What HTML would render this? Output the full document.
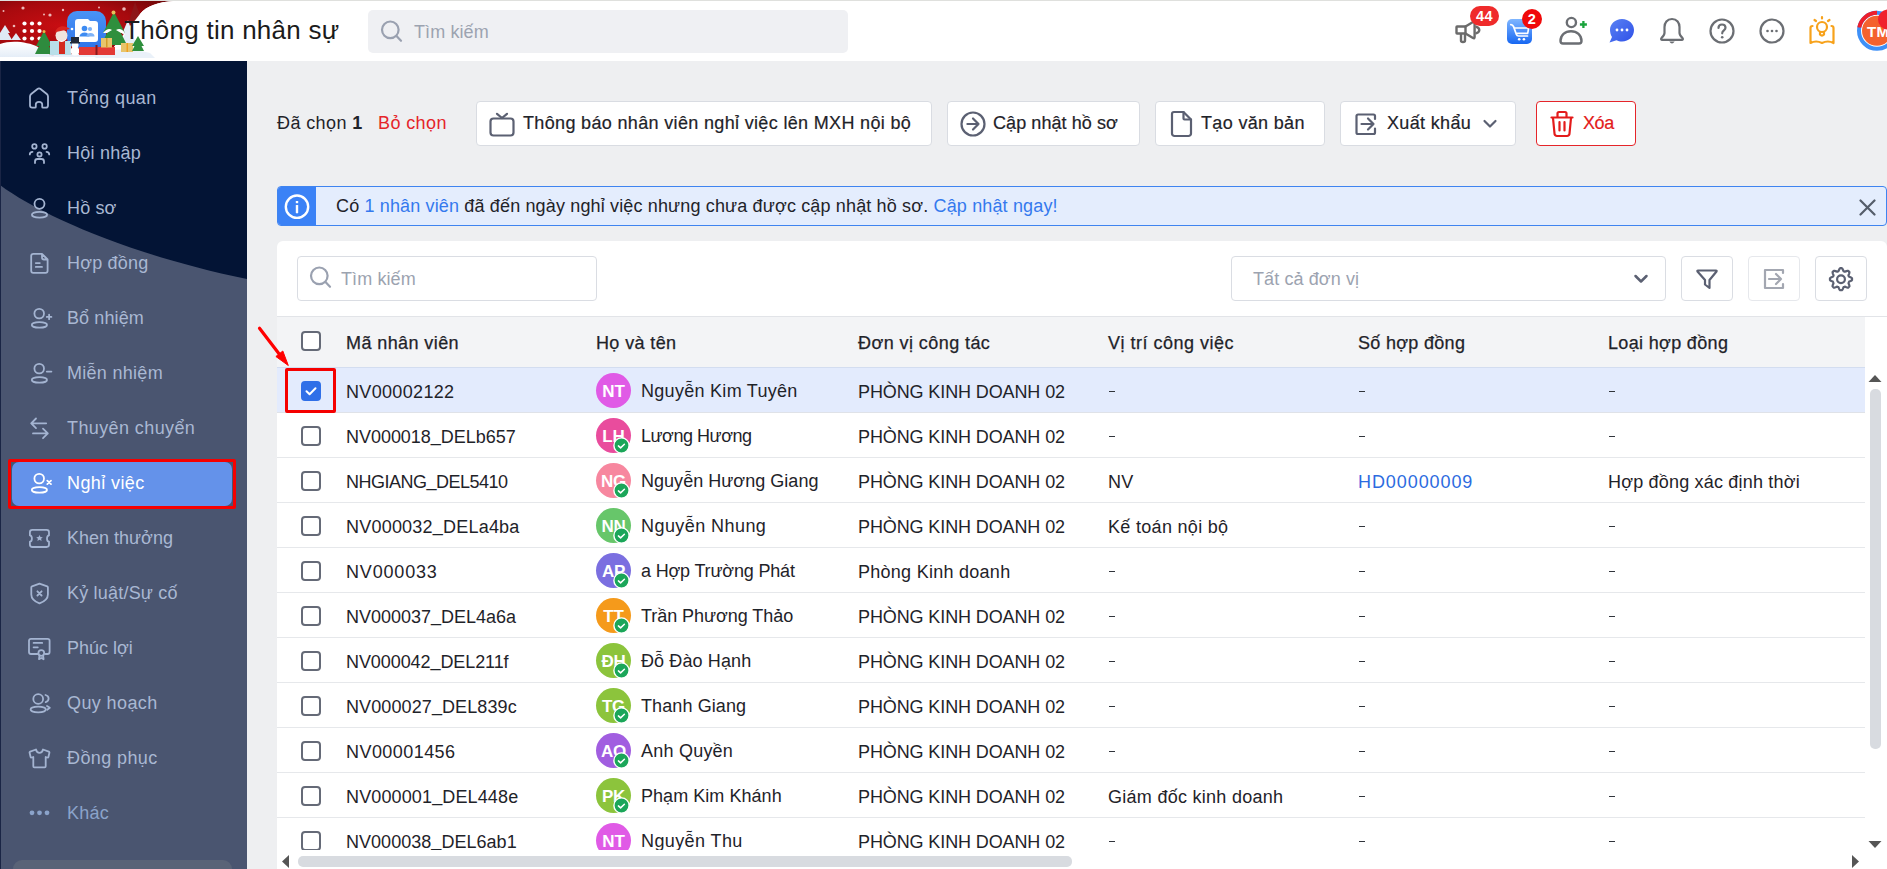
<!DOCTYPE html>
<html><head><meta charset="utf-8">
<style>
*{box-sizing:border-box;margin:0;padding:0}
html,body{width:1887px;height:869px;overflow:hidden;background:#eeeff1;font-family:"Liberation Sans",sans-serif;color:#1f2329;letter-spacing:0.4px}
.abs{position:absolute}
#hdr{position:absolute;left:0;top:0;width:1887px;height:61px;background:#fff;}
#hdrline{position:absolute;left:0;top:0;width:1887px;height:1px;background:#dfe0dd}
#title{position:absolute;left:124px;top:15px;font-size:26px;letter-spacing:0.25px;color:#1b1b1b;white-space:nowrap}
#hsearch{position:absolute;left:368px;top:10px;width:480px;height:43px;background:#eff0f3;border-radius:5px}
#hsearch .ph{position:absolute;left:46px;top:12px;font-size:18px;color:#9ca3b0;letter-spacing:0.1px}
#side{position:absolute;left:0;top:61px;width:247px;height:808px;background:#4a5570;overflow:hidden}
.sitem{position:absolute;left:12px;width:220px;height:40px}
.sitem .sic{position:absolute;left:16px;top:9px;width:25px;height:25px;line-height:0}
.sitem .stx{position:absolute;left:55px;top:11px;font-size:18px;color:#a9b8d3;white-space:nowrap;line-height:20px}
.sitem.sel{background:#6492ea;border-radius:7px;height:44px}
.sitem.sel .stx{color:#fff;top:11px}
.sitem.sel .sic{top:9px}
.selbox{position:absolute;left:8px;width:228px;height:50px;border:3px solid #f50000;border-radius:2px}
#main{position:absolute;left:248px;top:61px;width:1639px;height:808px;background:#eeeff1}
.t18{font-size:18px;white-space:nowrap}
.btn{position:absolute;top:101px;height:45px;background:#fff;border:1px solid #d9dce2;border-radius:4px}
.btn .bt{position:absolute;top:10.7px;font-size:18px;white-space:nowrap;color:#1f2329;line-height:20px;-webkit-text-stroke:0.2px currentColor;letter-spacing:0.34px}
.btn svg{position:absolute}
#banner{position:absolute;left:277px;top:186px;width:1610px;height:40px;background:#e4edfd;border:1px solid #3f84f0;border-radius:4px;overflow:hidden}
#banner .ib{position:absolute;left:0;top:0;width:38px;height:40px;background:#3b82f6}
#card{position:absolute;left:277px;top:241px;width:1610px;height:640px;background:#fff;border-radius:6px}
.inp{position:absolute;background:#fff;border:1px solid #dadde3;border-radius:4px}
.ibtn{position:absolute;top:256px;width:52px;height:45px;background:#fff;border:1px solid #dadde3;border-radius:4px}
#thead{position:absolute;left:277px;top:316px;width:1588px;height:51px;background:#f3f4f6;border-top:1px solid #e2e4e8}
#thead .h{position:absolute;top:16px;font-size:18px;color:#1f2329;white-space:nowrap;line-height:20px;-webkit-text-stroke:0.25px #1f2329}
.row{position:absolute;left:277px;width:1588px;height:46px;background:#fff;border-top:1px solid #e6e8eb;border-bottom:1px solid #e6e8eb}
.row.selrow{background:#e3ebfd;border-top-color:#d3ddf0;border-bottom-color:#dfe2e8;z-index:1}
.cb{position:absolute;left:24px;top:13px;width:20px;height:20px;border:2px solid #656a77;border-radius:4px;background:#fff}
.cb.on{background:#2f6fe8;border-color:#2f6fe8}
.cb.on svg{position:absolute;left:-2px;top:-2px}
.cell{position:absolute;top:14px;font-size:18px;line-height:20px;white-space:nowrap;color:#1f2329}
.c1{left:69px}.c2{left:364px;top:13px}.c3{left:581px}.c4{left:831px}.c5{left:1081px}.c6{left:1331px}
.link{color:#2c6be0}
.dash{position:absolute;top:23.2px;width:6px;height:1.3px;background:#30343b}
.av{position:absolute;left:319px;top:5px;width:35px;height:35px;border-radius:50%;color:#fff;font-size:17px;font-weight:bold;text-align:center;line-height:37px;letter-spacing:-0.2px}
.badge{position:absolute;left:16.5px;top:19px;width:17px;height:17px;line-height:0}
</style></head><body>
<div id="hdr">
  <svg class="abs" style="left:0;top:0" width="175" height="61" viewBox="0 0 175 61">
    <defs>
      <radialGradient id="rg" cx="0.35" cy="0.45" r="0.75"><stop offset="0" stop-color="#c80d12"/><stop offset="0.55" stop-color="#a80a0e"/><stop offset="1" stop-color="#6e0608"/></radialGradient>
      <linearGradient id="snow" x1="0" y1="0" x2="0" y2="1"><stop offset="0" stop-color="#ffffff"/><stop offset="1" stop-color="#e3ecf7"/></linearGradient>
      <linearGradient id="ib" x1="0" y1="0" x2="0" y2="1"><stop offset="0" stop-color="#4a93f5"/><stop offset="1" stop-color="#2f74ea"/></linearGradient>
    </defs>
    <path d="M0 1 H174 C158 2 146 6 140 14 C134 22 128 28 124 34 L114 47 L104 56 H0 Z" fill="url(#rg)"/>
    <polygon points="135,2 128,24 142,20" fill="#8a1a1c" opacity="0.8"/>
    <g fill="#f3c9c9" opacity="0.9"><circle cx="23" cy="8" r="1.6"/><circle cx="3.5" cy="11" r="1"/><circle cx="44" cy="14.5" r="1"/><circle cx="50" cy="15" r="1.6"/><circle cx="63" cy="10" r="1.2"/><circle cx="99" cy="7.5" r="1"/><circle cx="124" cy="9" r="1.8"/><circle cx="14" cy="26" r="1.3"/></g>
    <path d="M0 33 L5 25 L10 33 L8 33 L12 40 L0 40 Z" fill="#dfe9f5"/>
    <path d="M11 40 L16 33 L21 40 Z" fill="#dfe9f5"/>
    <path d="M0 44 C12 40 28 42 38 47 C45 51 50 56 60 58 H0 Z" fill="url(#snow)"/>
    <path d="M30 58 C60 52 100 54 150 56 L165 59 H30 Z" fill="#e9f0f8"/>
    <rect x="0" y="57" width="175" height="4" fill="#ffffff"/>
    <path d="M124 34 C128 28 134 22 140 14 C146 6 158 2 174 1 H175 V61 H100 L104 56 L114 47 Z" fill="#ffffff"/><path d="M128 20 L122 34 L125 34 L120 44 L136 44 Z" fill="#e6eef8"/><path d="M100 52 C115 48 135 49 150 53 L155 58 H95 Z" fill="#eaf1f9"/>
    <g fill="#fff"><circle cx="24.5" cy="23.5" r="2.1"/><circle cx="32" cy="23.5" r="2.1"/><circle cx="39.5" cy="23.5" r="2.1"/><circle cx="24.5" cy="31" r="2.1"/><circle cx="32" cy="31" r="2.1"/><circle cx="39.5" cy="31" r="2.1"/><circle cx="24.5" cy="38.5" r="2.1"/><circle cx="32" cy="38.5" r="2.1"/><circle cx="39.5" cy="38.5" r="2.1"/></g>
    <path d="M44 31 L36 46 L39 46 L35 54 L53 54 L49 46 L52 46 Z" fill="#2e8b3e"/>
    <circle cx="44" cy="31.5" r="1.5" fill="#e8b64a"/>
    <rect x="67" y="11" width="39" height="37" rx="10" fill="url(#ib)"/>
    <path d="M78 19 H88 L90 21 H95 Q98 21 98 24 V39 Q98 42 95 42 H78 Q75 42 75 39 V22 Q75 19 78 19 Z" fill="#fff"/>
    <circle cx="84.5" cy="28.5" r="2.8" fill="#3d8bf2"/><circle cx="90" cy="29" r="2.1" fill="#7db2f7"/>
    <path d="M79.5 36.5 a5 4 0 0 1 10 0 Z" fill="#3d8bf2"/><path d="M86.5 36.5 a4 3.5 0 0 1 8 0 Z" fill="#7db2f7"/>
    <rect x="50" y="41" width="21" height="14" fill="#b9dfe9"/><rect x="59" y="41" width="6" height="13" fill="#d42a1e"/>
    <circle cx="61.5" cy="35.5" r="6" fill="#f0e4de"/><path d="M55 33 C56 26 64 24 70 29 L56 32 Z" fill="#d9251f"/><circle cx="72" cy="29" r="1.3" fill="#fff"/>
    <path d="M56 38 Q61.5 44 67 38 Q66 41 61.5 42 Q57 41 56 38 Z" fill="#ffffff"/>
    <circle cx="75" cy="51" r="4.5" fill="#ffffff"/><circle cx="75" cy="45" r="3.5" fill="#ffffff"/><rect x="71" y="37" width="8" height="5" fill="#222a3a"/><rect x="70" y="42" width="10" height="1.5" fill="#222a3a"/>
    <rect x="79" y="47" width="36" height="8" fill="#e33a36"/><rect x="95.5" y="45" width="2" height="10" fill="#8a1a1c"/>
    <path d="M114 12 L103 33 L107 33 L101 45 L127 45 L121 33 L125 33 Z" fill="#2f8f3d"/>
    <path d="M103 33 Q108 27 112 30 L107 33 Z M116 30 Q121 27 125 33 L121 33 Z" fill="#ffffff"/>
    <circle cx="113.5" cy="12.5" r="2" fill="#e8c05a"/>
    <rect x="101" y="38" width="11" height="9.5" fill="#e8c46a"/><rect x="106" y="38" width="1.5" height="9.5" fill="#d29a2a"/>
    <rect x="121" y="43" width="12" height="9" fill="#e8c46a"/><rect x="126.5" y="43" width="1.5" height="9" fill="#f0a020"/>
    <path d="M138 36 L132 46 L134.5 46 L132 51 L144 51 L141.5 46 L144 46 Z" fill="#2f8f3d"/>
  </svg>
  <div id="hdrline"></div>
  <div id="title">Thông tin nhân sự</div>
  <div id="hsearch">
    <svg class="abs" style="left:12px;top:9px" width="24" height="24" viewBox="0 0 24 24"><circle cx="10.3" cy="10.8" r="8.3" stroke="#9aa1b0" stroke-width="2.2" fill="none"/><path d="M16.5 17 L21 21.8" stroke="#9aa1b0" stroke-width="2.2" stroke-linecap="round"/></svg>
    <div class="ph">Tìm kiếm</div>
  </div>
  <!-- header icons -->
  
  <!-- megaphone -->
  <svg class="abs" style="left:1445px;top:5px" width="40" height="45" viewBox="1445 5 40 45"><g stroke="#6b6b6b" stroke-width="2.4" fill="none" stroke-linejoin="round" stroke-linecap="round"><path d="M1457 26.5 H1465.5 V33.5 H1457 Q1456.5 33.5 1456.5 33 V27 Q1456.5 26.5 1457 26.5 Z"/><path d="M1465.5 26.5 L1473 22 Q1474.6 21.2 1474.6 23 V37 Q1474.6 38.8 1473 38 L1465.5 33.5"/><path d="M1476.5 26.8 Q1479.3 28 1479.3 30 Q1479.3 32 1476.5 33.2"/><path d="M1461 34.5 V40.6 Q1461 42 1463 42 Q1465 42 1465 40.6 V34.5"/></g></svg>
  <div class="abs" style="left:1470px;top:6px;width:29px;height:20px;border-radius:10px;background:#ef2b2b;color:#fff;font-weight:bold;font-size:14.5px;line-height:20px;text-align:center;letter-spacing:0.5px">44</div>
  <!-- cart -->
  <svg class="abs" style="left:1507px;top:19px" width="25" height="25" viewBox="0 0 25 25"><defs><linearGradient id="cg" x1="0" y1="0" x2="0" y2="1"><stop offset="0" stop-color="#7fb6ff"/><stop offset="1" stop-color="#1767f2"/></linearGradient></defs><rect x="0" y="0" width="25" height="25" rx="5" fill="url(#cg)"/><path d="M3.8 5.6 Q5.6 5.4 6.6 7.6 L9.3 15.2 Q9.9 17 11.6 17 H20.5 M7.6 9 H21.5 Q21.3 12 20.6 14.4 H9" stroke="#fff" stroke-width="1.7" fill="none" stroke-linejoin="round" stroke-linecap="round"/><circle cx="12.2" cy="20.2" r="1.3" fill="#fff"/><circle cx="16.9" cy="20.2" r="1.3" fill="#fff"/></svg>
  <div class="abs" style="left:1522px;top:9px;width:20px;height:20px;border-radius:50%;background:#f00a0a;color:#fff;font-weight:bold;font-size:14.5px;line-height:20px;text-align:center">2</div>
  <!-- person add -->
  <svg class="abs" style="left:1555px;top:14px" width="36" height="34" viewBox="1555 14 36 34"><g stroke="#6b6e73" stroke-width="2.4" fill="none" stroke-linejoin="round"><circle cx="1571.4" cy="22.5" r="4.6"/><path d="M1560.5 41 C1560.5 35 1565 31.2 1571 31.2 C1577 31.2 1581.5 35 1581.5 41 Q1581.5 43.5 1579 43.5 H1563 Q1560.5 43.5 1560.5 41 Z"/></g><path d="M1583.4 21 V28 M1579.9 24.5 H1586.9" stroke="#1aa33c" stroke-width="2.3"/></svg>
  <!-- chat -->
  <svg class="abs" style="left:1609px;top:18px" width="26" height="26" viewBox="0 0 26 26"><defs><linearGradient id="chg" x1="0" y1="0" x2="1" y2="1"><stop offset="0" stop-color="#5a82f3"/><stop offset="1" stop-color="#2f50e8"/></linearGradient></defs><path d="M13 1 C20 1 25 6 25 12 C25 18.5 20 23.5 13 23.5 C11 23.5 9 23 7.5 22.2 L0.5 24.5 L3 19 C1.8 17 1 14.5 1 12 C1 6 6 1 13 1 Z" fill="url(#chg)"/><circle cx="8" cy="12" r="1.4" fill="#fff"/><circle cx="13" cy="12" r="1.4" fill="#fff"/><circle cx="18" cy="12" r="1.4" fill="#fff"/></svg>
  <!-- bell -->
  <svg class="abs" style="left:1658px;top:17px" width="28" height="29" viewBox="0 0 28 29"><g stroke="#6b6e73" stroke-width="2.2" fill="none" stroke-linejoin="round"><path d="M14 2 C9 2 6.5 6 6.5 10 V16 C6.5 18 5 19.5 3.5 21 Q2.5 22.5 4 22.8 H24 Q25.5 22.5 24.5 21 C23 19.5 21.5 18 21.5 16 V10 C21.5 6 19 2 14 2 Z"/></g><path d="M11.3 24.6 Q14 28.6 16.7 24.6 Z" fill="#6b6e73"/><g></g></svg>
  <!-- question -->
  <svg class="abs" style="left:1708px;top:17px" width="28" height="28" viewBox="0 0 28 28"><circle cx="14" cy="14" r="11.5" stroke="#6b6e73" stroke-width="2.2" fill="none"/><path d="M10.5 11 C10.5 8.5 12 7.5 14 7.5 C16 7.5 17.5 8.8 17.5 10.8 C17.5 13.3 14.2 13.5 14.2 16.3" stroke="#6b6e73" stroke-width="2.2" fill="none" stroke-linecap="round"/><circle cx="14.2" cy="20.3" r="1.3" fill="#6b6e73"/></svg>
  <!-- more -->
  <svg class="abs" style="left:1758px;top:17px" width="28" height="28" viewBox="0 0 28 28"><circle cx="14" cy="14" r="11.5" stroke="#6b6e73" stroke-width="2.2" fill="none"/><circle cx="9.5" cy="14" r="1.3" fill="#6b6e73"/><circle cx="14" cy="14" r="1.3" fill="#6b6e73"/><circle cx="18.5" cy="14" r="1.3" fill="#6b6e73"/></svg>
  <!-- bulb book -->
  <svg class="abs" style="left:1808px;top:15px" width="28" height="30" viewBox="0 0 28 30"><g stroke="#f7a21b" stroke-width="2.2" fill="none" stroke-linecap="round" stroke-linejoin="round"><path d="M4.5 11 Q2.5 11 2.5 13 V28 Q8 25 14 28 Q20 25 25.5 28 V13 Q25.5 11 23.5 11"/><circle cx="14" cy="12" r="5"/><path d="M12 17 V19.5 Q14 21.5 16 19.5 V17"/><path d="M14 2 V3.5 M6.5 5 L8 6 M21.5 5 L20 6"/></g></svg>
  <!-- avatar -->
  <svg class="abs" style="left:1855px;top:9px" width="32" height="44" viewBox="0 0 32 44"><circle cx="22" cy="21.8" r="18" stroke="#3e90f7" stroke-width="4" fill="none"/><path d="M4.3 18.5 A18 18 0 0 1 22 3.8" stroke="#ee1f2b" stroke-width="4" fill="none"/><circle cx="22" cy="21.8" r="15" fill="#f4622e"/><text x="12" y="27.5" font-family="Liberation Sans" font-weight="bold" font-size="15" fill="#fff">TM</text><circle cx="33" cy="10.5" r="10" fill="#f0212d"/></svg>

</div>
<div id="side">
  <svg class="abs" style="left:0;top:0" width="247" height="808" viewBox="0 61 247 808"><path d="M0 61 H247 V279 C130 255 40 215 0 185 Z" fill="#031435"/></svg>
  <div class="abs" style="left:0;top:0;width:1px;height:808px;background:#1a2545"></div>
<div class="sitem" style="top:16px"><span class="sic"><svg width="25" height="25" viewBox="0 0 25 25"><path d="M2 10.5 Q2 9 3.2 8 L9.5 3 Q11 1.9 12.5 3 L18.8 8 Q20 9 20 10.5 V19.5 Q20 21.7 17.8 21.7 H15 Q14.2 21.7 14.2 20.9 V18.5 Q14.2 15.9 11 15.9 Q7.8 15.9 7.8 18.5 V20.9 Q7.8 21.7 7 21.7 H4.2 Q2 21.7 2 19.5 Z" stroke="#a4b4d1" stroke-width="1.8" fill="none" stroke-linecap="round" stroke-linejoin="round"/></svg></span><span class="stx" style="letter-spacing:0.4px">Tổng quan</span></div>
<div class="sitem" style="top:71px"><span class="sic"><svg width="25" height="25" viewBox="0 0 25 25"><circle cx="6.4" cy="5.4" r="2.2" stroke="#a4b4d1" stroke-width="1.8" fill="none" stroke-linecap="round" stroke-linejoin="round"/><circle cx="16.6" cy="5.4" r="2.2" stroke="#a4b4d1" stroke-width="1.8" fill="none" stroke-linecap="round" stroke-linejoin="round"/><circle cx="11.5" cy="13.4" r="2.1" stroke="#a4b4d1" stroke-width="1.8" fill="none" stroke-linecap="round" stroke-linejoin="round"/><path d="M1.8 13.4 Q1.8 10.8 4.5 10.8 M21.2 13.4 Q21.2 10.8 18.5 10.8 M7 22 V20.5 Q7 18 9.5 18 H13.5 Q16 18 16 20.5 V22" stroke="#a4b4d1" stroke-width="1.8" fill="none" stroke-linecap="round" stroke-linejoin="round"/></svg></span><span class="stx" style="letter-spacing:0.26px">Hội nhập</span></div>
<div class="sitem" style="top:126px"><span class="sic"><svg width="25" height="25" viewBox="0 0 25 25"><circle cx="11.5" cy="7.8" r="5" stroke="#a4b4d1" stroke-width="1.8" fill="none" stroke-linecap="round" stroke-linejoin="round"/><ellipse cx="11.5" cy="18.7" rx="7.6" ry="2.9" stroke="#a4b4d1" stroke-width="1.8" fill="none" stroke-linecap="round" stroke-linejoin="round"/></svg></span><span class="stx" style="letter-spacing:0.15px">Hồ sơ</span></div>
<div class="sitem" style="top:181px"><span class="sic"><svg width="25" height="25" viewBox="0 0 25 25"><path d="M5.5 2.8 H14 L19.6 8.5 V19.8 Q19.6 21.9 17.5 21.9 H5.3 Q3.2 21.9 3.2 19.8 V5 Q3.2 2.8 5.5 2.8 Z M14 2.8 V6.5 Q14 8.5 16 8.5 H19.6 M7.8 12.1 H11.8 M7.8 15.9 H14" stroke="#a4b4d1" stroke-width="1.8" fill="none" stroke-linecap="round" stroke-linejoin="round"/></svg></span><span class="stx" style="letter-spacing:0.2px">Hợp đồng</span></div>
<div class="sitem" style="top:236px"><span class="sic"><svg width="25" height="25" viewBox="0 0 25 25"><circle cx="11.2" cy="7.6" r="4.8" stroke="#a4b4d1" stroke-width="1.8" fill="none" stroke-linecap="round" stroke-linejoin="round"/><ellipse cx="11.4" cy="18.9" rx="7.6" ry="2.8" stroke="#a4b4d1" stroke-width="1.8" fill="none" stroke-linecap="round" stroke-linejoin="round"/><path d="M21.1 8.6 V13.2 M18.8 10.9 H23.4" stroke="#a4b4d1" stroke-width="1.8" fill="none" stroke-linecap="round" stroke-linejoin="round"/></svg></span><span class="stx" style="letter-spacing:0.1px">Bổ nhiệm</span></div>
<div class="sitem" style="top:291px"><span class="sic"><svg width="25" height="25" viewBox="0 0 25 25"><circle cx="11.2" cy="7.6" r="4.8" stroke="#a4b4d1" stroke-width="1.8" fill="none" stroke-linecap="round" stroke-linejoin="round"/><ellipse cx="11.4" cy="18.9" rx="7.6" ry="2.8" stroke="#a4b4d1" stroke-width="1.8" fill="none" stroke-linecap="round" stroke-linejoin="round"/><path d="M18.8 10.6 H23.4" stroke="#a4b4d1" stroke-width="1.8" fill="none" stroke-linecap="round" stroke-linejoin="round"/></svg></span><span class="stx" style="letter-spacing:0.29px">Miễn nhiệm</span></div>
<div class="sitem" style="top:346px"><span class="sic"><svg width="25" height="25" viewBox="0 0 25 25"><path d="M18.2 7.3 H3.2 M8 2.5 L3.2 7.3 L8 12.1 M5 17.4 H19.8 M15 12.6 L19.8 17.4 L15 22.2" stroke="#a4b4d1" stroke-width="1.8" fill="none" stroke-linecap="round" stroke-linejoin="round"/></svg></span><span class="stx" style="letter-spacing:0.4px">Thuyên chuyển</span></div>
<div class="selbox" style="top:398px"></div>
<div class="sitem sel" style="top:401px"><span class="sic"><svg width="25" height="25" viewBox="0 0 25 25"><circle cx="11.2" cy="7.6" r="4.8" stroke="#ffffff" stroke-width="1.8" fill="none" stroke-linecap="round" stroke-linejoin="round"/><ellipse cx="11.4" cy="18.9" rx="7.6" ry="2.8" stroke="#ffffff" stroke-width="1.8" fill="none" stroke-linecap="round" stroke-linejoin="round"/><path d="M19.3 9.6 L23 13.1 M23 9.6 L19.3 13.1" stroke="#ffffff" stroke-width="1.8" fill="none" stroke-linecap="round" stroke-linejoin="round"/></svg></span><span class="stx">Nghỉ việc</span></div>
<div class="sitem" style="top:456px"><span class="sic"><svg width="25" height="25" viewBox="0 0 25 25"><path d="M1.9 6.3 Q1.9 3.9 4.3 3.9 H18.6 Q21 3.9 21 6.3 V9.3 Q19 9.5 19 12.5 Q19 15.5 21 15.7 V18.6 Q21 21 18.6 21 H4.3 Q1.9 21 1.9 18.6 V15.7 Q3.9 15.5 3.9 12.5 Q3.9 9.5 1.9 9.3 Z" stroke="#a4b4d1" stroke-width="1.8" fill="none" stroke-linecap="round" stroke-linejoin="round"/><path d="M11.5 8.9 L12.5 11 L14.8 11.2 L13.1 12.7 L13.6 15 L11.5 13.8 L9.4 15 L9.9 12.7 L8.2 11.2 L10.5 11 Z" fill="#a4b4d1" stroke="none"/></svg></span><span class="stx" style="letter-spacing:0.0px">Khen thưởng</span></div>
<div class="sitem" style="top:511px"><span class="sic"><svg width="25" height="25" viewBox="0 0 25 25"><path d="M11.5 2.6 L19.2 5.3 Q19.9 5.6 19.9 6.3 V13.5 Q19.9 19.3 11.5 22.4 Q3.3 19.3 3.3 13.5 V6.3 Q3.3 5.6 4 5.3 Z M9.4 10.3 L13.6 14.5 M13.6 10.3 L9.4 14.5" stroke="#a4b4d1" stroke-width="1.8" fill="none" stroke-linecap="round" stroke-linejoin="round"/></svg></span><span class="stx" style="letter-spacing:0.2px">Kỷ luật/Sự cố</span></div>
<div class="sitem" style="top:566px"><span class="sic"><svg width="25" height="25" viewBox="0 0 25 25"><path d="M9.5 18 H3 Q1 18 1 16 V4.8 Q1 2.9 3 2.9 H19.6 Q21.6 2.9 21.6 4.8 V16 Q21.6 18 19.6 18 H17.5 M5.6 6.9 H14.2 M5.6 11.3 H9.8" stroke="#a4b4d1" stroke-width="1.8" fill="none" stroke-linecap="round" stroke-linejoin="round"/><circle cx="13.3" cy="17" r="2.9" stroke="#a4b4d1" stroke-width="1.8" fill="none" stroke-linecap="round" stroke-linejoin="round"/><path d="M11.5 19.5 L11 23.2 L13.3 22 L15.6 23.2 L15.1 19.5" stroke="#a4b4d1" stroke-width="1.8" fill="none" stroke-linecap="round" stroke-linejoin="round"/></svg></span><span class="stx" style="letter-spacing:0.0px">Phúc lợi</span></div>
<div class="sitem" style="top:621px"><span class="sic"><svg width="25" height="25" viewBox="0 0 25 25"><circle cx="10.2" cy="8" r="4.9" stroke="#a4b4d1" stroke-width="1.8" fill="none" stroke-linecap="round" stroke-linejoin="round"/><ellipse cx="10.2" cy="18.5" rx="7.6" ry="2.8" stroke="#a4b4d1" stroke-width="1.8" fill="none" stroke-linecap="round" stroke-linejoin="round"/><path d="M17.5 4 Q20.6 4.8 20.6 7.5 Q20.6 10.3 17.7 11.2 M19 15 L21.8 16.7 L19.2 18.7" stroke="#a4b4d1" stroke-width="1.8" fill="none" stroke-linecap="round" stroke-linejoin="round"/></svg></span><span class="stx" style="letter-spacing:0.4px">Quy hoạch</span></div>
<div class="sitem" style="top:676px"><span class="sic"><svg width="25" height="25" viewBox="0 0 25 25"><path d="M8 3.5 L2.2 5.6 Q1.4 6 1.6 6.8 L2.6 11 Q2.8 11.7 3.6 11.5 L5.3 11 V20.3 Q5.3 21.3 6.3 21.3 H16.7 Q17.7 21.3 17.7 20.3 V11 L19.4 11.5 Q20.2 11.7 20.4 11 L21.4 6.8 Q21.6 6 20.8 5.6 L15 3.5 Q14.3 6.8 11.5 6.8 Q8.7 6.8 8 3.5 Z" stroke="#a4b4d1" stroke-width="1.8" fill="none" stroke-linecap="round" stroke-linejoin="round"/></svg></span><span class="stx" style="letter-spacing:0.4px">Đồng phục</span></div>
<div class="sitem" style="top:731px"><span class="sic"><svg width="25" height="25" viewBox="0 0 25 25"><circle cx="4" cy="11.8" r="2.4" fill="#8ba3ca"/><circle cx="11.5" cy="11.8" r="2.4" fill="#8ba3ca"/><circle cx="19" cy="11.8" r="2.4" fill="#8ba3ca"/></svg></span><span class="stx" style="letter-spacing:0.2px;color:#8ba3ca">Khác</span></div>
  <div class="abs" style="left:12.5px;top:799px;width:219px;height:30px;background:#596377;border-radius:9px"></div>
</div>
<div id="main"></div>
<div class="abs t18" style="left:277px;top:113px">Đã chọn <b>1</b></div>
<div class="abs t18" style="left:378px;top:113px;color:#e5252a">Bỏ chọn</div>
<div class="btn" style="left:476px;width:456px"><div class="bt" style="left:46px">Thông báo nhân viên nghỉ việc lên MXH nội bộ</div></div>
<div class="btn" style="left:947px;width:193px"><div class="bt" style="left:45px;letter-spacing:0.07px">Cập nhật hồ sơ</div></div>
<div class="btn" style="left:1155px;width:170px"><div class="bt" style="left:45px">Tạo văn bản</div></div>
<div class="btn" style="left:1340px;width:176px"><div class="bt" style="left:46px">Xuất khẩu</div></div>
<div class="btn" style="left:1536px;width:100px;border-color:#e5252a"><div class="bt" style="left:46px;color:#e31b1b;letter-spacing:-0.4px">Xóa</div></div>

<svg class="abs" style="left:488px;top:112px" width="28" height="26" viewBox="0 0 28 26"><g stroke="#5b6072" stroke-width="2.2" fill="none" stroke-linecap="round" stroke-linejoin="round"><rect x="2.5" y="6.5" width="23" height="17" rx="3"/><path d="M9 1.8 L14 6 L19 1.8"/></g></svg>
<svg class="abs" style="left:959px;top:111px" width="28" height="27" viewBox="0 0 28 27"><g stroke="#5b6072" stroke-width="2.2" fill="none" stroke-linecap="round" stroke-linejoin="round"><circle cx="14" cy="13" r="11.5"/><path d="M8.4 13 H19.5 M14 7.5 L19.5 13 L14 18.5"/></g></svg>
<svg class="abs" style="left:1170px;top:110px" width="24" height="28" viewBox="0 0 24 28"><g stroke="#5b6072" stroke-width="2.2" fill="none" stroke-linecap="round" stroke-linejoin="round"><path d="M4 2 H13.5 L21 9.5 V23.5 A2.5 2.5 0 0 1 18.5 26 H4.5 A2.5 2.5 0 0 1 2 23.5 V4 A2 2 0 0 1 4 2 Z"/><path d="M13.5 2 V8.5 Q13.5 9.5 14.5 9.5 H21"/></g></svg>
<svg class="abs" style="left:1355px;top:113px" width="24" height="23" viewBox="0 0 24 23"><g stroke="#5b6072" stroke-width="2.2" fill="none" stroke-linecap="round" stroke-linejoin="round"><path d="M20 6 V3 A1.5 1.5 0 0 0 18.5 1.5 H3 A1.5 1.5 0 0 0 1.5 3 V19.5 A1.5 1.5 0 0 0 3 21 H18.5 A1.5 1.5 0 0 0 20 19.5 V15.5"/><path d="M6.5 11 H18.5 M13 5.5 L18.5 11 L13 16.5"/></g></svg>
<svg class="abs" style="left:1482px;top:118px" width="16" height="12" viewBox="0 0 16 12"><path d="M2.5 3 L8 8.5 L13.5 3" stroke="#5b6072" stroke-width="2.2" fill="none" stroke-linecap="round" stroke-linejoin="round"/></svg>
<svg class="abs" style="left:1549px;top:110px" width="26" height="28" viewBox="0 0 26 28"><g stroke="#e31b1b" stroke-width="2.2" fill="none" stroke-linecap="round" stroke-linejoin="round"><path d="M2.5 7.5 H23.5"/><path d="M8.5 7 V3.5 A1.5 1.5 0 0 1 10 2 H16 A1.5 1.5 0 0 1 17.5 3.5 V7"/><path d="M4 8 L5.5 23.5 A2.5 2.5 0 0 0 8 26 H18 A2.5 2.5 0 0 0 20.5 23.5 L22 8"/><path d="M10.5 12 V20.5 M15.5 12 V20.5"/></g></svg>
<div id="banner"><div class="ib"><svg class="abs" style="left:5px;top:6px" width="28" height="28" viewBox="0 0 28 28"><circle cx="14" cy="13.7" r="11.2" stroke="#fff" stroke-width="2.4" fill="none"/><rect x="12.8" y="8" width="2.4" height="2.2" fill="#fff"/><rect x="12.8" y="12" width="2.4" height="8.2" rx="0.5" fill="#fff"/></svg></div>
  <svg class="abs" style="left:1580px;top:11px" width="18" height="18" viewBox="0 0 18 18"><path d="M2.5 2.5 L16.5 16.5 M16.5 2.5 L2.5 16.5" stroke="#555d6a" stroke-width="2.2" stroke-linecap="round"/></svg>
  <div class="abs t18" style="left:58px;top:9px;letter-spacing:0.15px">Có <span style="color:#3479ee">1 nhân viên</span> đã đến ngày nghỉ việc nhưng chưa được cập nhật hồ sơ. <span style="color:#3479ee">Cập nhật ngay!</span></div>
</div>
<div id="card"></div>
<div class="inp" style="left:297px;top:256px;width:300px;height:45px">
  <svg class="abs" style="left:10.5px;top:8px" width="24" height="24" viewBox="0 0 24 24"><circle cx="10.3" cy="10.8" r="8.3" stroke="#9aa1b0" stroke-width="2.2" fill="none"/><path d="M16.5 17 L21 21.8" stroke="#9aa1b0" stroke-width="2.2" stroke-linecap="round"/></svg>
  <div class="abs t18" style="left:43px;top:12px;color:#9ca3b0;letter-spacing:0.1px">Tìm kiếm</div>
</div>
<div class="inp" style="left:1231px;top:256px;width:435px;height:45px">
  <div class="abs t18" style="left:21px;top:12px;color:#9ca3b0;letter-spacing:0.1px">Tất cả đơn vị</div>
</div>
<div class="ibtn" style="left:1681px"></div>
<div class="ibtn" style="left:1748px;border-color:#e6e8ec"></div>
<div class="ibtn" style="left:1815px"></div>

<svg class="abs" style="left:1633px;top:272px" width="16" height="14" viewBox="0 0 16 14"><path d="M2.5 4 L8 9.5 L13.5 4" stroke="#5b6072" stroke-width="2.5" fill="none" stroke-linecap="round" stroke-linejoin="round"/></svg>
<svg class="abs" style="left:1695px;top:267px" width="24" height="24" viewBox="0 0 24 24"><path d="M3 3.5 H21 Q22 3.5 21.5 4.5 L14.5 13 V21 L10 17.5 V13 L2.5 4.5 Q2 3.5 3 3.5 Z" stroke="#5b6072" stroke-width="2.2" fill="none" stroke-linejoin="round" stroke-linecap="round"/></svg>
<svg class="abs" style="left:1763px;top:268px" width="24" height="22" viewBox="0 0 24 22"><g stroke="#a3a7b1" stroke-width="2.2" fill="none" stroke-linecap="round" stroke-linejoin="round"><path d="M20 5 V2 H2 V20 H20 V16"/><path d="M6 11 H18 M13 6 L18 11 L13 16"/></g></svg>
<svg class="abs" style="left:1828px;top:266px" width="26" height="26" viewBox="0 0 26 26"><g stroke="#5b6072" stroke-width="2.2" fill="none" stroke-linejoin="round"><path d="M13.00 2.15 L13.43 2.16 L13.87 2.18 L14.26 2.58 L14.60 3.10 L14.89 3.69 L15.14 4.28 L15.36 4.82 L15.58 5.26 L15.89 5.37 L16.20 5.49 L16.50 5.62 L16.79 5.76 L17.25 5.60 L17.80 5.37 L18.39 5.13 L19.01 4.93 L19.62 4.80 L20.18 4.80 L20.50 5.09 L20.81 5.39 L21.11 5.70 L21.40 6.02 L21.40 6.58 L21.27 7.19 L21.07 7.81 L20.83 8.40 L20.60 8.95 L20.44 9.41 L20.58 9.70 L20.71 10.00 L20.83 10.31 L20.94 10.62 L21.38 10.84 L21.92 11.06 L22.51 11.31 L23.10 11.60 L23.62 11.94 L24.02 12.33 L24.04 12.77 L24.05 13.20 L24.04 13.63 L24.02 14.07 L23.62 14.46 L23.10 14.80 L22.51 15.09 L21.92 15.34 L21.38 15.56 L20.94 15.78 L20.83 16.09 L20.71 16.40 L20.58 16.70 L20.44 16.99 L20.60 17.45 L20.83 18.00 L21.07 18.59 L21.27 19.21 L21.40 19.82 L21.40 20.38 L21.11 20.70 L20.81 21.01 L20.50 21.31 L20.18 21.60 L19.62 21.60 L19.01 21.47 L18.39 21.27 L17.80 21.03 L17.25 20.80 L16.79 20.64 L16.50 20.78 L16.20 20.91 L15.89 21.03 L15.58 21.14 L15.36 21.58 L15.14 22.12 L14.89 22.71 L14.60 23.30 L14.26 23.82 L13.87 24.22 L13.43 24.24 L13.00 24.25 L12.57 24.24 L12.13 24.22 L11.74 23.82 L11.40 23.30 L11.11 22.71 L10.86 22.12 L10.64 21.58 L10.42 21.14 L10.11 21.03 L9.80 20.91 L9.50 20.78 L9.21 20.64 L8.75 20.80 L8.20 21.03 L7.61 21.27 L6.99 21.47 L6.38 21.60 L5.82 21.60 L5.50 21.31 L5.19 21.01 L4.89 20.70 L4.60 20.38 L4.60 19.82 L4.73 19.21 L4.93 18.59 L5.17 18.00 L5.40 17.45 L5.56 16.99 L5.42 16.70 L5.29 16.40 L5.17 16.09 L5.06 15.78 L4.62 15.56 L4.08 15.34 L3.49 15.09 L2.90 14.80 L2.38 14.46 L1.98 14.07 L1.96 13.63 L1.95 13.20 L1.96 12.77 L1.98 12.33 L2.38 11.94 L2.90 11.60 L3.49 11.31 L4.08 11.06 L4.62 10.84 L5.06 10.62 L5.17 10.31 L5.29 10.00 L5.42 9.70 L5.56 9.41 L5.40 8.95 L5.17 8.40 L4.93 7.81 L4.73 7.19 L4.60 6.58 L4.60 6.02 L4.89 5.70 L5.19 5.39 L5.50 5.09 L5.82 4.80 L6.38 4.80 L6.99 4.93 L7.61 5.13 L8.20 5.37 L8.75 5.60 L9.21 5.76 L9.50 5.62 L9.80 5.49 L10.11 5.37 L10.42 5.26 L10.64 4.82 L10.86 4.28 L11.11 3.69 L11.40 3.10 L11.74 2.58 L12.13 2.18 L12.57 2.16 Z"/><circle cx="13" cy="13.2" r="3.9"/></g></svg>
<div id="thead">
  <div class="cb" style="top:14px"></div>
  <div class="h" style="left:69px;letter-spacing:0.409px">Mã nhân viên</div>
  <div class="h" style="left:319px;letter-spacing:0.375px">Họ và tên</div>
  <div class="h" style="left:581px;letter-spacing:0.429px">Đơn vị công tác</div>
  <div class="h" style="left:831px;letter-spacing:0.5px">Vị trí công việc</div>
  <div class="h" style="left:1081px;letter-spacing:0.3px">Số hợp đồng</div>
  <div class="h" style="left:1331px;letter-spacing:0.333px">Loại hợp đồng</div>
</div>
<div class="row selrow" style="top:367px"><div class="cb on"><svg width="20" height="20" viewBox="0 0 20 20"><path d="M5.5 10.2 L8.6 13.2 L14.5 7.2" stroke="#fff" stroke-width="2" fill="none" stroke-linecap="round" stroke-linejoin="round"/></svg></div><div class="cell c1" style="letter-spacing:0.333px">NV00002122</div><div class="av" style="background:#e05ae6">NT</div><div class="cell c2" style="letter-spacing:0.287px">Nguyễn Kim Tuyên</div><div class="cell c3" style="letter-spacing:-0.111px">PHÒNG KINH DOANH 02</div><div class="dash" style="left:832px"></div><div class="dash" style="left:1082px"></div><div class="dash" style="left:1332px"></div></div>
<div class="row" style="top:412px"><div class="cb"></div><div class="cell c1" style="letter-spacing:-0.033px">NV000018<span style="position:relative;top:-2.5px">_</span>DELb657</div><div class="av" style="background:#e94c9d">LH<span class="badge"><svg width="17" height="17" viewBox="0 0 17 17"><circle cx="8.5" cy="8.5" r="7.6" fill="#1ba659" stroke="#fff" stroke-width="1.4"/><path d="M5.4 8.9 L7.6 10.9 L11.4 7.3" stroke="#fff" stroke-width="1.5" fill="none" stroke-linecap="round" stroke-linejoin="round"/></svg></span></div><div class="cell c2" style="letter-spacing:-0.47px">Lương Hương</div><div class="cell c3" style="letter-spacing:-0.111px">PHÒNG KINH DOANH 02</div><div class="dash" style="left:832px"></div><div class="dash" style="left:1082px"></div><div class="dash" style="left:1332px"></div></div>
<div class="row" style="top:457px"><div class="cb"></div><div class="cell c1" style="letter-spacing:-0.507px">NHGIANG<span style="position:relative;top:-2.5px">_</span>DEL5410</div><div class="av" style="background:#f7879f">NG<span class="badge"><svg width="17" height="17" viewBox="0 0 17 17"><circle cx="8.5" cy="8.5" r="7.6" fill="#1ba659" stroke="#fff" stroke-width="1.4"/><path d="M5.4 8.9 L7.6 10.9 L11.4 7.3" stroke="#fff" stroke-width="1.5" fill="none" stroke-linecap="round" stroke-linejoin="round"/></svg></span></div><div class="cell c2" style="letter-spacing:0.029px">Nguyễn Hương Giang</div><div class="cell c3" style="letter-spacing:-0.111px">PHÒNG KINH DOANH 02</div><div class="cell c4" style="letter-spacing:0.2px">NV</div><div class="cell c5 link" style="letter-spacing:0.922px">HD00000009</div><div class="cell c6" style="letter-spacing:0.19px">Hợp đồng xác định thời</div></div>
<div class="row" style="top:502px"><div class="cb"></div><div class="cell c1" style="letter-spacing:0.213px">NV000032<span style="position:relative;top:-2.5px">_</span>DELa4ba</div><div class="av" style="background:#67c66a">NN<span class="badge"><svg width="17" height="17" viewBox="0 0 17 17"><circle cx="8.5" cy="8.5" r="7.6" fill="#1ba659" stroke="#fff" stroke-width="1.4"/><path d="M5.4 8.9 L7.6 10.9 L11.4 7.3" stroke="#fff" stroke-width="1.5" fill="none" stroke-linecap="round" stroke-linejoin="round"/></svg></span></div><div class="cell c2" style="letter-spacing:0.436px">Nguyễn Nhung</div><div class="cell c3" style="letter-spacing:-0.111px">PHÒNG KINH DOANH 02</div><div class="cell c4" style="letter-spacing:0.308px">Kế toán nội bộ</div><div class="dash" style="left:1082px"></div><div class="dash" style="left:1332px"></div></div>
<div class="row" style="top:547px"><div class="cb"></div><div class="cell c1" style="letter-spacing:0.829px">NV000033</div><div class="av" style="background:#7b6fe0">AP<span class="badge"><svg width="17" height="17" viewBox="0 0 17 17"><circle cx="8.5" cy="8.5" r="7.6" fill="#1ba659" stroke="#fff" stroke-width="1.4"/><path d="M5.4 8.9 L7.6 10.9 L11.4 7.3" stroke="#fff" stroke-width="1.5" fill="none" stroke-linecap="round" stroke-linejoin="round"/></svg></span></div><div class="cell c2" style="letter-spacing:-0.175px">a Hợp Trường Phát</div><div class="cell c3" style="letter-spacing:0.267px">Phòng Kinh doanh</div><div class="dash" style="left:832px"></div><div class="dash" style="left:1082px"></div><div class="dash" style="left:1332px"></div></div>
<div class="row" style="top:592px"><div class="cb"></div><div class="cell c1" style="letter-spacing:-0.007px">NV000037<span style="position:relative;top:-2.5px">_</span>DEL4a6a</div><div class="av" style="background:#f59a1b">TT<span class="badge"><svg width="17" height="17" viewBox="0 0 17 17"><circle cx="8.5" cy="8.5" r="7.6" fill="#1ba659" stroke="#fff" stroke-width="1.4"/><path d="M5.4 8.9 L7.6 10.9 L11.4 7.3" stroke="#fff" stroke-width="1.5" fill="none" stroke-linecap="round" stroke-linejoin="round"/></svg></span></div><div class="cell c2" style="letter-spacing:-0.053px">Trần Phương Thảo</div><div class="cell c3" style="letter-spacing:-0.111px">PHÒNG KINH DOANH 02</div><div class="dash" style="left:832px"></div><div class="dash" style="left:1082px"></div><div class="dash" style="left:1332px"></div></div>
<div class="row" style="top:637px"><div class="cb"></div><div class="cell c1" style="letter-spacing:-0.08px">NV000042<span style="position:relative;top:-2.5px">_</span>DEL211f</div><div class="av" style="background:#8cc43c">ĐH<span class="badge"><svg width="17" height="17" viewBox="0 0 17 17"><circle cx="8.5" cy="8.5" r="7.6" fill="#1ba659" stroke="#fff" stroke-width="1.4"/><path d="M5.4 8.9 L7.6 10.9 L11.4 7.3" stroke="#fff" stroke-width="1.5" fill="none" stroke-linecap="round" stroke-linejoin="round"/></svg></span></div><div class="cell c2" style="letter-spacing:0.11px">Đỗ Đào Hạnh</div><div class="cell c3" style="letter-spacing:-0.111px">PHÒNG KINH DOANH 02</div><div class="dash" style="left:832px"></div><div class="dash" style="left:1082px"></div><div class="dash" style="left:1332px"></div></div>
<div class="row" style="top:682px"><div class="cb"></div><div class="cell c1" style="letter-spacing:0.1px">NV000027<span style="position:relative;top:-2.5px">_</span>DEL839c</div><div class="av" style="background:#8cc43c">TG<span class="badge"><svg width="17" height="17" viewBox="0 0 17 17"><circle cx="8.5" cy="8.5" r="7.6" fill="#1ba659" stroke="#fff" stroke-width="1.4"/><path d="M5.4 8.9 L7.6 10.9 L11.4 7.3" stroke="#fff" stroke-width="1.5" fill="none" stroke-linecap="round" stroke-linejoin="round"/></svg></span></div><div class="cell c2" style="letter-spacing:0.1px">Thanh Giang</div><div class="cell c3" style="letter-spacing:-0.111px">PHÒNG KINH DOANH 02</div><div class="dash" style="left:832px"></div><div class="dash" style="left:1082px"></div><div class="dash" style="left:1332px"></div></div>
<div class="row" style="top:727px"><div class="cb"></div><div class="cell c1" style="letter-spacing:0.444px">NV00001456</div><div class="av" style="background:#a15ee0">AQ<span class="badge"><svg width="17" height="17" viewBox="0 0 17 17"><circle cx="8.5" cy="8.5" r="7.6" fill="#1ba659" stroke="#fff" stroke-width="1.4"/><path d="M5.4 8.9 L7.6 10.9 L11.4 7.3" stroke="#fff" stroke-width="1.5" fill="none" stroke-linecap="round" stroke-linejoin="round"/></svg></span></div><div class="cell c2" style="letter-spacing:0.225px">Anh Quyền</div><div class="cell c3" style="letter-spacing:-0.111px">PHÒNG KINH DOANH 02</div><div class="dash" style="left:832px"></div><div class="dash" style="left:1082px"></div><div class="dash" style="left:1332px"></div></div>
<div class="row" style="top:772px"><div class="cb"></div><div class="cell c1" style="letter-spacing:0.133px">NV000001<span style="position:relative;top:-2.5px">_</span>DEL448e</div><div class="av" style="background:#8cc43c">PK<span class="badge"><svg width="17" height="17" viewBox="0 0 17 17"><circle cx="8.5" cy="8.5" r="7.6" fill="#1ba659" stroke="#fff" stroke-width="1.4"/><path d="M5.4 8.9 L7.6 10.9 L11.4 7.3" stroke="#fff" stroke-width="1.5" fill="none" stroke-linecap="round" stroke-linejoin="round"/></svg></span></div><div class="cell c2" style="letter-spacing:0.046px">Phạm Kim Khánh</div><div class="cell c3" style="letter-spacing:-0.111px">PHÒNG KINH DOANH 02</div><div class="cell c4" style="letter-spacing:0.278px">Giám đốc kinh doanh</div><div class="dash" style="left:1082px"></div><div class="dash" style="left:1332px"></div></div>
<div class="row" style="top:817px"><div class="cb"></div><div class="cell c1" style="letter-spacing:0.033px">NV000038<span style="position:relative;top:-2.5px">_</span>DEL6ab1</div><div class="av" style="background:#e05ae6">NT</div><div class="cell c2" style="letter-spacing:0.4px">Nguyễn Thu</div><div class="cell c3" style="letter-spacing:-0.111px">PHÒNG KINH DOANH 02</div><div class="dash" style="left:832px"></div><div class="dash" style="left:1082px"></div><div class="dash" style="left:1332px"></div></div>

<!-- scrollbars -->
<div class="abs" style="left:1865px;top:316px;width:22px;height:1px;background:#e2e4e8"></div>
<svg class="abs" style="left:1866px;top:372px" width="18" height="12" viewBox="0 0 18 12"><path d="M2.5 10 L9 3 L15.5 10 Z" fill="#555"/></svg>
<div class="abs" style="left:1870px;top:389px;width:11px;height:360px;background:#d8dbe0;border-radius:5px"></div>
<svg class="abs" style="left:1866px;top:838px" width="18" height="12" viewBox="0 0 18 12"><path d="M2.5 3 L9 10 L15.5 3 Z" fill="#555"/></svg>
<div class="abs" style="left:277px;top:850px;width:1588px;height:19px;background:#fff"></div>
<svg class="abs" style="left:279px;top:853px" width="12" height="16" viewBox="0 0 12 16"><path d="M10 2 L3 8.5 L10 15 Z" fill="#555"/></svg>
<div class="abs" style="left:298px;top:856px;width:774px;height:11px;background:#d8dbe0;border-radius:5px"></div>
<svg class="abs" style="left:1850px;top:853px" width="12" height="16" viewBox="0 0 12 16"><path d="M2 2 L9 8.5 L2 15 Z" fill="#555"/></svg>
<!-- red arrow -->
<svg class="abs" style="left:250px;top:320px" width="50" height="50" viewBox="250 320 50 50"><path d="M259.5 328.3 L283 359" stroke="#ff0000" stroke-width="3.2" stroke-linecap="round"/><path d="M288.3 365.5 L275.9 356.5 L282.8 351 Z" fill="#ff0000" stroke="#ff0000" stroke-width="1" stroke-linejoin="round"/></svg>
<!-- red box around checkbox -->
<div class="abs" style="left:285px;top:368px;width:51px;height:45px;border:3px solid #f50000;border-radius:2px;z-index:5"></div>
</body></html>
